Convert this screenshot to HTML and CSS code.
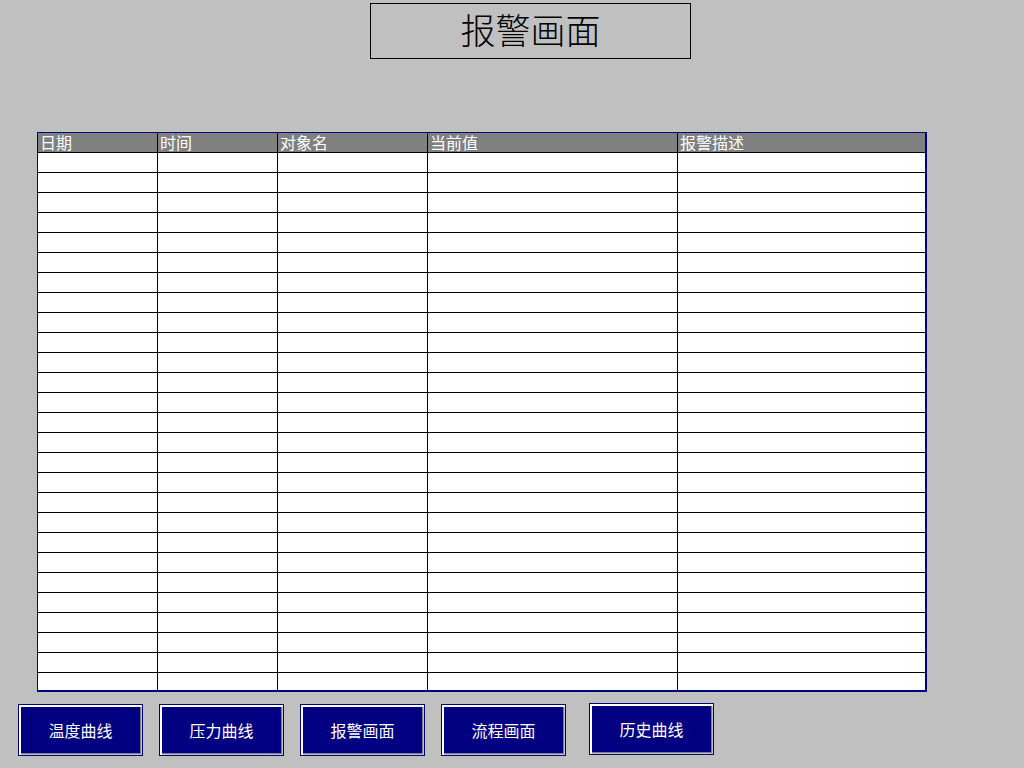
FILE: index.html
```html
<!DOCTYPE html>
<html lang="zh-CN">
<head>
  <meta charset="UTF-8" />
  <meta name="viewport" content="width=device-width, initial-scale=1.0"/>
  <title>报警画面</title>
  <link rel="stylesheet" href="styles.css">
</head>
<body>
  <div class="title">报警画面</div>

  <div class="alarm-table">
    <table>
      <colgroup>
        <col class="col-date">
        <col class="col-time">
        <col class="col-name">
        <col class="col-value">
        <col class="col-desc">
      </colgroup>
      <thead>
        <tr>
          <th>日期</th>
          <th>时间</th>
          <th>对象名</th>
          <th>当前值</th>
          <th>报警描述</th>
        </tr>
      </thead>
      <tbody id="alarmRows"></tbody>
    </table>
  </div>

  <div class="nav-buttons">
    <button class="nav-btn">温度曲线</button>
    <button class="nav-btn">压力曲线</button>
    <button class="nav-btn">报警画面</button>
    <button class="nav-btn">流程画面</button>
    <button class="nav-btn last">历史曲线</button>
  </div>

  <script>
    // empty alarm rows
    const body = document.getElementById('alarmRows');
    for (let i = 0; i < 27; i++) {
      const tr = document.createElement('tr');
      tr.innerHTML = '<td></td><td></td><td></td><td></td><td></td>';
      body.appendChild(tr);
    }
  </script>
</body>
</html>
```

FILE: styles.css
```css
:root {
  --navy: #000080;
  --panel: #c0c0c0;
  --header: #808080;
}

* {
  box-sizing: border-box;
  margin: 0;
  padding: 0;
  font-family: "Noto Sans CJK SC", "Liberation Sans", sans-serif;
}

body {
  background-color: var(--panel);
  width: 1024px;
  height: 768px;
  overflow: hidden;
}

.title {
  width: 321px;
  height: 56px;
  margin: 3px 0 0 370px;
  border: 1px solid #000;
  font-size: 35px;
  line-height: 50px;
  text-align: center;
  color: #000;
  font-weight: 300;
}

.alarm-table {
  width: 890px;
  margin: 73px 0 0 37px;
  border-top: 1px solid var(--navy);
  border-left: 1px solid var(--navy);
  border-right: 2px solid var(--navy);
  border-bottom: 2px solid var(--navy);
  background: #fff;
}

table {
  width: 887px;
  table-layout: fixed;
  border-collapse: separate;
  border-spacing: 0;
}

.col-date { width: 120px; }
.col-time { width: 120px; }
.col-name { width: 150px; }
.col-value { width: 250px; }
.col-desc { width: 247px; }

th, td {
  height: 20px;
  border-right: 1px solid #000;
  border-bottom: 1px solid #000;
  padding: 0 2px;
  font-size: 16px;
  line-height: 18px;
  text-align: left;
  vertical-align: top;
  white-space: nowrap;
}

th {
  background-color: var(--header);
  color: #fff;
  font-weight: normal;
}

th:last-child, td:last-child {
  border-right: none;
}

tbody tr:last-child td {
  border-bottom: none;
  height: 17px;
}

.nav-buttons {
  display: flex;
  align-items: flex-start;
  gap: 16px;
  margin: 12px 0 0 18px;
}

.nav-btn {
  width: 125px;
  height: 52px;
  background-color: var(--navy);
  border: 1px solid var(--navy);
  box-shadow: inset 2px 2px #fff, inset -1px -1px #c0c0c0, inset -2px -2px #808080;
  color: #fff;
  font-size: 16px;
  cursor: pointer;
}

.nav-btn.last {
  margin-left: 7px;
  margin-top: -1px;
}
```
